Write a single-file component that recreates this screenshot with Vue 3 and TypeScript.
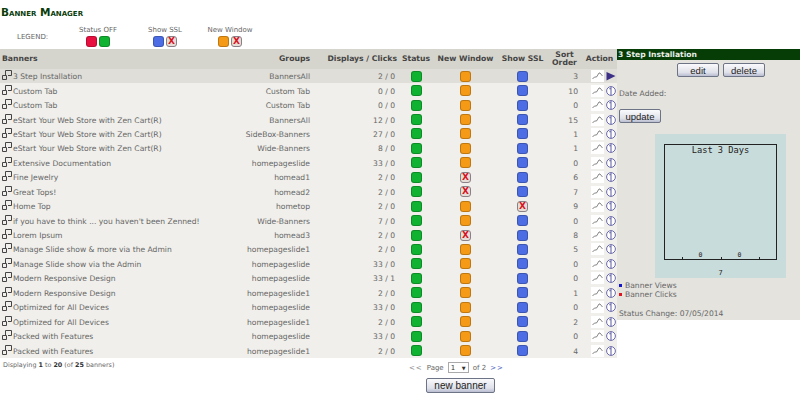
<script setup lang="ts">
interface Row { name: string; group: string; disp: string; win: boolean; ssl: boolean; sort: number }
const mk = (name: string, group: string, disp: string, sort: number, win = true, ssl = true): Row => ({ name, group, disp, sort, win, ssl })
const e = 'eStart Your Web Store with Zen Cart(R)'
const rows: Row[] = [
  mk('3 Step Installation', 'BannersAll', '2 / 0', 3),
  mk('Custom Tab', 'Custom Tab', '0 / 0', 10),
  mk('Custom Tab', 'Custom Tab', '0 / 0', 0),
  mk(e, 'BannersAll', '12 / 0', 15),
  mk(e, 'SideBox-Banners', '27 / 0', 1),
  mk(e, 'Wide-Banners', '8 / 0', 1),
  mk('Extensive Documentation', 'homepageslide', '33 / 0', 0),
  mk('Fine Jewelry', 'homead1', '2 / 0', 6, false),
  mk('Great Tops!', 'homead2', '2 / 0', 7, false),
  mk('Home Top', 'hometop', '2 / 0', 9, true, false),
  mk("if you have to think ... you haven't been Zenned!", 'Wide-Banners', '7 / 0', 0),
  mk('Lorem Ipsum', 'homead3', '2 / 0', 8, false),
  mk('Manage Slide show & more via the Admin', 'homepageslide1', '2 / 0', 5),
  mk('Manage Slide show via the Admin', 'homepageslide', '33 / 0', 0),
  mk('Modern Responsive Design', 'homepageslide', '33 / 1', 0),
  mk('Modern Responsive Design', 'homepageslide1', '2 / 0', 1),
  mk('Optimized for All Devices', 'homepageslide', '33 / 0', 0),
  mk('Optimized for All Devices', 'homepageslide1', '2 / 0', 2),
  mk('Packed with Features', 'homepageslide', '33 / 0', 0),
  mk('Packed with Features', 'homepageslide1', '2 / 0', 4),
]
</script>

<template>
  <div class="page">
    <h1 class="title">Banner Manager</h1>
    <div class="legend">
      <span class="legend-label">LEGEND:</span>
      <div class="legend-item status"><span>Status OFF</span><div class="pair"><i class="dot red"></i><i class="dot green"></i></div></div>
      <div class="legend-item ssl"><span>Show SSL</span><div class="pair"><i class="dot blue"></i><i class="dot off">X</i></div></div>
      <div class="legend-item win"><span>New Window</span><div class="pair"><i class="dot orange"></i><i class="dot off">X</i></div></div>
    </div>

    <div class="main">
      <div class="list">
        <div class="row head">
          <div class="c-name">Banners</div>
          <div class="c-group">Groups</div>
          <div class="c-disp">Displays / Clicks</div>
          <div class="c-mid">Status</div>
          <div class="c-mid">New Window</div>
          <div class="c-mid">Show SSL</div>
          <div class="c-sorth">Sort Order</div>
          <div class="c-mid">Action</div>
        </div>
        <div v-for="(r, i) in rows" :key="i" class="row body" :class="{ sel: i === 0 }">
          <div class="c-name">
            <svg class="win-ico" width="10" height="10" viewBox="0 0 10 10"><path d="M3.5 5V.5h6v5H6M.5 5.5h4v4h-4z" fill="none" stroke="#444" stroke-width="1"/></svg>
            <span class="txt">{{ r.name }}</span>
          </div>
          <div class="c-group txt">{{ r.group }}</div>
          <div class="c-disp txt">{{ r.disp }}</div>
          <div class="c-mid"><i class="dot green"></i></div>
          <div class="c-mid"><i class="dot" :class="r.win ? 'orange' : 'off'">{{ r.win ? '' : 'X' }}</i></div>
          <div class="c-mid"><i class="dot" :class="r.ssl ? 'blue' : 'off'">{{ r.ssl ? '' : 'X' }}</i></div>
          <div class="c-sort txt">{{ r.sort }}</div>
          <div class="c-act">
            <span class="graph"><svg width="11" height="10" viewBox="0 0 11 10"><path d="M.5 8 2.5 6 4.5 6 7 2 8 2 10.5 5" fill="none" stroke="#666" stroke-width=".8"/></svg></span>
            <svg v-if="i === 0" width="10" height="10" viewBox="0 0 10 10"><path d="M.5 1 9.5 5 .5 9.5z" fill="#3c2f86"/></svg>
            <svg v-else width="10" height="10" viewBox="0 0 10 10"><circle cx="5" cy="5" r="4.4" fill="#fff" stroke="#6a6aaa"/><path d="M5 .8v8.4M3.2 2.8H5" fill="none" stroke="#6a6aaa" stroke-width="1.1"/></svg>
          </div>
        </div>
        <div class="foot">
          <div class="count">Displaying <b>1</b> to <b>20</b> (of <b>25</b> banners)</div>
          <div class="pager">
            <div class="pages">
              <span class="arrows">&lt;&lt;</span><span>Page</span>
              <span class="select"><span>1</span><span class="caret">▼</span></span>
              <span>of 2</span><span class="arrows next">&gt;&gt;</span>
            </div>
            <button class="btn new">new banner</button>
          </div>
        </div>
      </div>

      <aside class="panel">
        <div class="panel-title">3 Step Installation</div>
        <div class="panel-btns"><button class="btn">edit</button><button class="btn">delete</button></div>
        <div class="added">Date Added:</div>
        <button class="btn update">update</button>
        <svg class="chart" width="131" height="144" viewBox="0 0 131 144">
          <rect width="131" height="144" fill="#c8dcdc"/>
          <rect x="9.5" y="10.5" width="112" height="115" fill="none" stroke="#222"/>
          <path d="M27.5 123v2M66.5 123v2M104.5 123v2" stroke="#222"/>
          <text x="65.5" y="19" text-anchor="middle" class="chart-title">Last 3 Days</text>
          <text x="45.5" y="123" text-anchor="middle" class="chart-small">0</text>
          <text x="84.5" y="123" text-anchor="middle" class="chart-small">0</text>
          <text x="65.5" y="141" text-anchor="middle" class="chart-small big">7</text>
        </svg>
        <div class="keys">
          <div><i class="sq b"></i>Banner Views</div>
          <div><i class="sq r"></i>Banner Clicks</div>
        </div>
        <div class="changed">Status Change: 07/05/2014</div>
      </aside>
    </div>
  </div>
</template>

<style>
html, body { margin: 0; background: #fff; }
</style>

<style scoped>
.page {
  width: 800px;
  height: 407px;
  overflow: hidden;
  font-family: "DejaVu Sans", Verdana, sans-serif;
  font-size: 7.6px;
  color: #666;
  box-sizing: border-box;
  padding-top: 5px;
}
.title {
  margin: 0 0 0 1px;
  height: 15px;
  line-height: 15px;
  font-size: 10.5px;
  font-variant: small-caps;
  font-weight: 700;
  color: #0b3d0b;
}
.legend { display: flex; height: 29px; align-items: flex-start; padding-top: 6px; box-sizing: border-box; color: #666; font-size: 7px; line-height: 9px; }
.legend-label { margin: 7px 0 0 17px; width: 56px; }
.legend-item { display: flex; flex-direction: column; align-items: center; }
.status { width: 50px; }
.ssl { width: 50px; margin-left: 17px; }
.win { width: 50px; margin-left: 15px; }
.pair { display: flex; gap: 2px; margin-top: 1px; }
.main { display: flex; align-items: flex-start; }
.list { width: 617px; flex: none; }
.row {
  display: grid;
  grid-template-columns: 225px 87px 86px 36px 63px 51px 34px 35px;
  align-items: center;
}
.head { height: 20px; background: #d6d5cd; font-weight: 700; color: #444; font-size: 7.7px; line-height: 8.5px; }
.body { height: 14.45px; background: #f0efeb; }
.body.sel { background: #dfded8; }
.txt { padding-top: 1px; }
.c-name { padding-left: 2px; display: flex; align-items: center; gap: 1px; white-space: nowrap; }
.win-ico { flex: none; margin-top: -2px; }
.c-group { text-align: right; padding-right: 2px; white-space: nowrap; }
.c-disp { text-align: right; padding-right: 1px; white-space: nowrap; }
.body .c-disp { padding-right: 3px; }
.c-mid { display: flex; justify-content: center; white-space: nowrap; }
.c-sorth { text-align: center; margin-left: -1px; }
.c-sort { text-align: right; padding-right: 4px; }
.c-act { display: flex; align-items: center; height: 100%; gap: 2px; padding-left: 9px; }
.graph { display: flex; background: #fff; height: 12px; align-items: center; padding: 0 1px; }
.dot {
  display: flex;
  align-items: center;
  justify-content: center;
  width: 11px;
  height: 11px;
  border-radius: 3px;
  box-sizing: border-box;
  font-style: normal;
  border: 1px solid rgba(0, 0, 0, .22);
}
.red { background: #e8103f; }
.green { background: #10b232; }
.blue { background: #4c6de4; }
.orange { background: #f59a16; }
.off {
  background: #e5ddd6;
  border: 1px solid #8a8088;
  color: #d8121f;
  font: 700 9px/1 "DejaVu Sans", sans-serif;
}
.foot { display: flex; align-items: flex-start; }
.count { width: 398px; padding: 3px 0 0 3px; box-sizing: border-box; font-size: 6.4px; color: #666; }
.count b { color: #333; }
.pager { display: flex; flex-direction: column; align-items: flex-start; margin-left: 11px; color: #666; font-size: 7px; }
.pages { display: flex; align-items: center; gap: 4px; height: 14px; margin-top: 3px; }
.arrows { color: #888; letter-spacing: 1px; }
.next { color: #4c5fc0; }
.select {
  display: flex;
  justify-content: space-between;
  align-items: center;
  width: 21px;
  height: 11px;
  padding: 0 2px;
  box-sizing: border-box;
  background: #fff;
  border: 1px solid #aaa;
  color: #333;
}
.caret { font-size: 5px; }
.btn {
  font-family: "Liberation Sans", Arial, sans-serif;
  font-size: 9.5px;
  padding: 0;
  height: 14px;
  color: #222;
  background: linear-gradient(#fafafc, #dfe1ea 70%, #b9bdd0);
  border: 1px solid #6d7486;
  border-radius: 2px;
}
.new { width: 69px; height: 15px; margin: 3px 0 0 17px; font-size: 10px; }
.panel { width: 183px; height: 271px; flex: none; background: #e4e3de; }
.panel-title { height: 11px; line-height: 11px; padding-left: 1px; background: #063c06; color: #e8efe8; font-weight: 700; font-size: 7.6px; }
.panel-btns { display: flex; gap: 4px; padding: 3px 0 0 60px; }
.panel-btns .btn { width: 42px; }
.added { margin: 12px 0 0 2px; height: 20px; line-height: 9px; }
.update { display: block; margin-left: 2px; width: 42px; }
.chart { display: block; margin: 11px 0 0 38px; }
.chart-title { font-family: "DejaVu Sans Mono", monospace; font-size: 8.7px; fill: #222; }
.chart-small { font-family: "DejaVu Sans Mono", monospace; font-size: 6.5px; fill: #222; }
.big { font-size: 7px; }
.keys { line-height: 8.5px; padding-left: 2px; margin-top: 4px; }
.sq { display: inline-block; width: 3px; height: 3px; margin-right: 3px; vertical-align: 1px; }
.b { background: #1414c8; }
.r { background: #e01420; }
.changed { margin: 10px 0 0 2px; line-height: 9px; }
</style>
